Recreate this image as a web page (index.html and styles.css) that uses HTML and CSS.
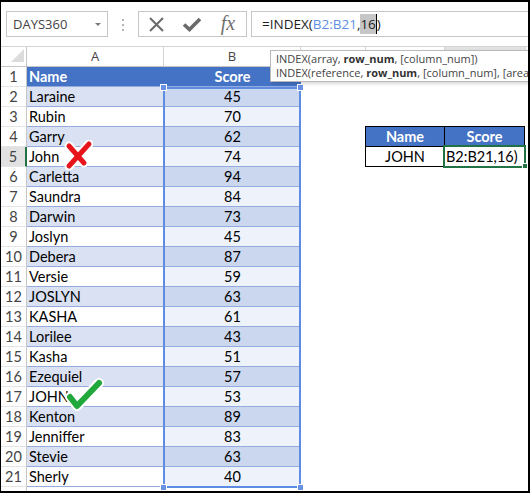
FILE: index.html
```html
<!DOCTYPE html>
<html>
<head>
<meta charset="utf-8">
<link rel="stylesheet" href="styles.css">
</head>
<body>
<div class="frame">
  <div class="toolbar">
    <div class="namebox"><span>DAYS360</span><span class="caret"></span></div>
    <div class="grip"><i></i><i></i><i></i></div>
    <div class="btns">
      <span class="btn b1"><svg width="15" height="15" viewBox="0 0 15 15"><path d="M1 1L14 14M14 1L1 14" stroke="#6a6a6a" stroke-width="2" fill="none"/></svg></span>
      <span class="btn b2"><svg width="20" height="15" viewBox="0 0 20 15"><path d="M2 7.5L7.5 12.5L18 2" stroke="#6a6a6a" stroke-width="3.6" fill="none" stroke-linejoin="miter"/></svg></span>
      <span class="btn fx">fx</span>
    </div>
    <div class="formula">=INDEX(<span class="ref">B2:B21</span>,<span class="hl">16</span><span class="cursor"></span>)</div>
  </div>
  <div class="colhead">
    <div class="ch corner"><span class="tri"></span></div>
    <div class="ch cA">A</div>
    <div class="ch cB">B</div>
    <div class="ch cC"></div>
    <div class="ch cD"></div>
    <div class="ch cE act"></div>
    <div class="ch cRest"></div>
  </div>
  <div class="sheet">
    <div class="rownums">
      <div class="rn">1</div><div class="rn">2</div><div class="rn">3</div><div class="rn">4</div>
      <div class="rn sel">5</div><div class="rn">6</div><div class="rn">7</div><div class="rn">8</div>
      <div class="rn">9</div><div class="rn">10</div><div class="rn">11</div><div class="rn">12</div>
      <div class="rn">13</div><div class="rn">14</div><div class="rn">15</div><div class="rn">16</div>
      <div class="rn">17</div><div class="rn">18</div><div class="rn">19</div><div class="rn">20</div>
      <div class="rn">21</div><div class="rn"></div>
    </div>
    <div class="col colA">
      <div class="c h">Name</div>
      <div class="c alt">Laraine</div>
      <div class="c">Rubin</div>
      <div class="c alt">Garry</div>
      <div class="c">John</div>
      <div class="c alt">Carletta</div>
      <div class="c">Saundra</div>
      <div class="c alt">Darwin</div>
      <div class="c">Joslyn</div>
      <div class="c alt">Debera</div>
      <div class="c">Versie</div>
      <div class="c alt">JOSLYN</div>
      <div class="c">KASHA</div>
      <div class="c alt">Lorilee</div>
      <div class="c">Kasha</div>
      <div class="c alt">Ezequiel</div>
      <div class="c">JOHN</div>
      <div class="c alt">Kenton</div>
      <div class="c">Jenniffer</div>
      <div class="c alt">Stevie</div>
      <div class="c">Sherly</div>
      <div class="c blank"></div>
    </div>
    <div class="col colB">
      <div class="c h">Score</div>
      <div class="c alt">45</div>
      <div class="c">70</div>
      <div class="c alt">62</div>
      <div class="c">74</div>
      <div class="c alt">94</div>
      <div class="c">84</div>
      <div class="c alt">73</div>
      <div class="c">45</div>
      <div class="c alt">87</div>
      <div class="c">59</div>
      <div class="c alt">63</div>
      <div class="c">61</div>
      <div class="c alt">43</div>
      <div class="c">51</div>
      <div class="c alt">57</div>
      <div class="c">53</div>
      <div class="c alt">89</div>
      <div class="c">83</div>
      <div class="c alt">63</div>
      <div class="c">40</div>
      <div class="c blank"></div>
      <div class="selbox"><i class="hd tl"></i><i class="hd tr"></i><i class="hd bl"></i><i class="hd br"></i></div>
    </div>
    <div class="rest">
      <div class="mini">
        <div class="mh">Name</div>
        <div class="mh">Score</div>
        <div class="md">JOHN</div>
        <div class="md active">B2:B21,16)</div>
      </div>
    </div>
  </div>

  <div class="tip">
    <div>INDEX(array, <b>row_num</b>, [column_num])</div>
    <div>INDEX(reference, <b>row_num</b>, [column_num], [area_num])</div>
  </div>

  <svg class="mark cross" width="30" height="30" viewBox="0 0 30 30">
    <path d="M26 4L6 26M6 6L21 23" stroke="#fff" stroke-width="9" stroke-linecap="round" fill="none"/>
    <path d="M26 4L6 26M6 6L21 23" stroke="#e8141c" stroke-width="5" stroke-linecap="round" fill="none"/>
  </svg>
  <svg class="mark check" width="42" height="38" viewBox="0 0 42 38">
    <path d="M6 21L13 30L35 7" stroke="#fff" stroke-width="10" stroke-linecap="round" stroke-linejoin="round" fill="none"/>
    <path d="M6 21L13 30L35 7" stroke="#21a83b" stroke-width="6" stroke-linecap="round" stroke-linejoin="round" fill="none"/>
  </svg>
</div>
</body>
</html>
```

FILE: styles.css
```css
html, body {
  margin: 0;
  padding: 0;
  background: #fff;
}

.frame {
  width: 530px;
  height: 493px;
  box-sizing: border-box;
  border: 2px solid #000;
  border-left-width: 1px;
  position: relative;
  overflow: hidden;
  background: #fff;
  display: flex;
  flex-direction: column;
  font-family: Lato, "Liberation Sans", sans-serif;
}

/* ---------- toolbar ---------- */
.toolbar {
  height: 44px;
  flex: none;
  box-sizing: border-box;
  padding: 9px 0 0 5px;
  display: flex;
  align-items: flex-start;
}

.namebox {
  width: 102px;
  height: 26px;
  box-sizing: border-box;
  border: 1px solid #c6c6c6;
  display: flex;
  align-items: center;
  padding-left: 6px;
  font-family: "Open Sans", sans-serif;
  font-size: 13px;
  color: #444;
}

.caret {
  margin-left: auto;
  margin-right: 6px;
  width: 0;
  height: 0;
  border-left: 3px solid transparent;
  border-right: 3px solid transparent;
  border-top: 3px solid #7a7a7a;
}

.grip {
  margin-left: 14px;
  width: 2px;
  padding-top: 8px;
  display: flex;
  flex-direction: column;
  gap: 3px;
}

.grip i {
  display: block;
  width: 2px;
  height: 2px;
  background: #b4b4b4;
}

.btns {
  margin-left: 14px;
  width: 109px;
  height: 26px;
  box-sizing: border-box;
  border: 1px solid #c6c6c6;
  display: flex;
}

.btn {
  display: flex;
  align-items: center;
  justify-content: center;
  height: 24px;
}

.b1 { width: 35px; }
.b2 { width: 36px; }

.fx {
  width: 36px;
  font-family: "Liberation Serif", serif;
  font-style: italic;
  font-size: 20px;
  color: #707070;
  padding-bottom: 2px;
  box-sizing: border-box;
}

.formula {
  margin-left: 4px;
  flex: 1;
  height: 26px;
  box-sizing: border-box;
  border: 1px solid #c6c6c6;
  border-right: 0;
  padding-left: 10px;
  font-family: "Open Sans", sans-serif;
  font-size: 13.5px;
  line-height: 24px;
  color: #1e1e1e;
  white-space: nowrap;
}

.ref { color: #5f8fe4; }

.hl {
  background: #c6c6c6;
  display: inline-block;
  line-height: 20px;
}

.cursor {
  display: inline-block;
  width: 1px;
  height: 20px;
  background: #000;
  vertical-align: -5px;
}

/* ---------- column header ---------- */
.colhead {
  flex: none;
  height: 21px;
  box-sizing: border-box;
  border-top: 1px solid #d4d4d4;
  border-bottom: 1px solid #c6c6c6;
  display: flex;
}

.ch {
  height: 19px;
  box-sizing: border-box;
  border-right: 1px solid #d4d4d4;
  text-align: center;
  font-family: "Open Sans", sans-serif;
  font-size: 13px;
  line-height: 19px;
  color: #444;
}

.corner {
  width: 26px;
  display: flex;
  justify-content: flex-end;
  align-items: flex-end;
  padding: 0 2px 4px 0;
  border-right-color: #c6c6c6;
}

.tri {
  width: 0;
  height: 0;
  border-left: 13px solid transparent;
  border-bottom: 13px solid #dcdcdc;
}

.cA, .cB { width: 137px; }
.cC { width: 65px; }
.cD { width: 79px; }
.cE { width: 81px; }
.cE.act { background: #e1e1e1; }
.cRest { flex: 1; border-right: 0; }

/* ---------- sheet ---------- */
.sheet {
  flex: 1;
  display: flex;
  overflow: hidden;
}

.rownums {
  width: 26px;
  flex: none;
}

.rn {
  height: 20px;
  box-sizing: border-box;
  border-bottom: 1px solid #e4e4e4;
  border-right: 1px solid #c6c6c6;
  text-align: center;
  font-size: 14.5px;
  line-height: 19px;
  color: #444;
}

.rn.sel {
  background: #e1e1e1;
  border-right: 2px solid #217346;
}

.col {
  width: 137px;
  flex: none;
}

.colB { position: relative; }

.c {
  height: 20px;
  box-sizing: border-box;
  border-bottom: 1px solid #93acdd;
  font-size: 14.5px;
  line-height: 19px;
  color: #000;
  white-space: nowrap;
  background: #fff;
}

.colA .c { padding-left: 2px; }
.colA .c.alt { background: #d9e1f2; }

.colB .c { text-align: center; background: #edf2fb; }
.colB .c.alt { background: #cad7ef; }

.c.h,
.colB .c.h {
  background: #4472c4;
  color: #fff;
  font-weight: bold;
}

.c.blank,
.colB .c.blank {
  background: #fff;
  border-bottom: 0;
}

.selbox {
  position: absolute;
  left: -1px;
  top: 20px;
  width: 138px;
  height: 401px;
  box-sizing: border-box;
  border: 2px solid #5e8ce2;
}

.hd {
  position: absolute;
  width: 7px;
  height: 7px;
  box-sizing: border-box;
  background: #6892e4;
  border: 1px solid #fff;
}

.hd.tl { left: -5px; top: -5px; }
.hd.tr { right: -5px; top: -5px; }
.hd.bl { left: -5px; bottom: -5px; }
.hd.br { right: -5px; bottom: -5px; }

.rest {
  flex: 1;
  padding: 59px 0 0 64px;
}

.mini {
  display: grid;
  grid-template-columns: 79px 80px;
  width: max-content;
  border-left: 1px solid #000;
  border-top: 1px solid #000;
}

.mini > div {
  height: 20px;
  box-sizing: border-box;
  border-right: 1px solid #000;
  border-bottom: 1px solid #000;
  text-align: center;
  font-size: 14.5px;
  line-height: 19px;
  color: #000;
  white-space: nowrap;
}

.mini > .mh {
  background: #4472c4;
  color: #fff;
  font-weight: bold;
}

.mini > .active {
  position: relative;
  text-align: left;
  padding-left: 1px;
}

.active::after {
  content: "";
  position: absolute;
  left: -2px;
  top: -2px;
  width: 83px;
  height: 23px;
  box-sizing: border-box;
  border: 2px solid #217346;
}

.active::before {
  content: "";
  position: absolute;
  left: 77px;
  top: 16px;
  width: 6px;
  height: 6px;
  box-sizing: border-box;
  background: #217346;
  border: 1px solid #fff;
  z-index: 2;
}

/* ---------- overlays ---------- */
.tip {
  position: absolute;
  left: 269px;
  top: 48px;
  width: 300px;
  height: 32px;
  box-sizing: border-box;
  border: 1px solid #bababa;
  background: #fff;
  box-shadow: 2px 2px 3px rgba(0, 0, 0, 0.15);
  padding: 1px 0 0 5px;
  font-family: "Open Sans", sans-serif;
  font-size: 11px;
  line-height: 14px;
  color: #444;
  white-space: nowrap;
}

.tip b { color: #333; }

.mark { position: absolute; }
.cross { left: 62px; top: 138px; }
.check { left: 63px; top: 374px; }
```
